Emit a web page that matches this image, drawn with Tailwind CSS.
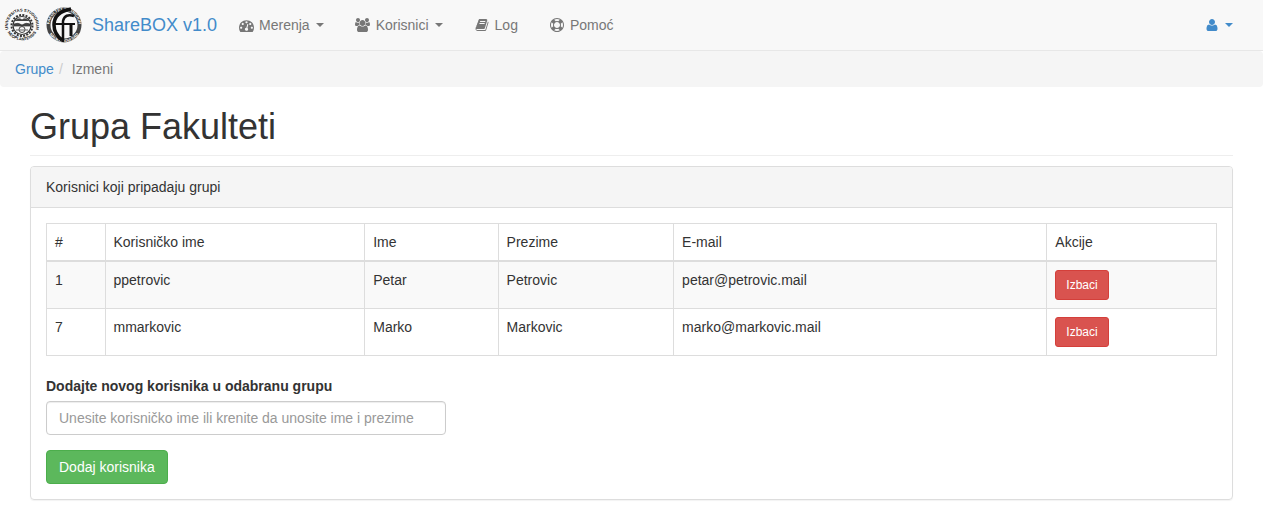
<!DOCTYPE html>
<html lang="sr-Latn">
<head>
    <meta charset="UTF-8">
    <meta name="viewport" content="width=device-width, initial-scale=1.0">
    <title>ShareBOX v1.0</title>
    <script src="https://cdn.jsdelivr.net/npm/@tailwindcss/browser@4"></script>
</head>
<body class="bg-white font-['Liberation_Sans',Arial,sans-serif] text-sm leading-5 text-[#333]">
    <nav class="flex items-center justify-between h-[51px] pr-[15px] border-b border-[#e7e7e7] bg-[#f8f8f8] text-[#777]">
        <div class="flex items-center">
            <a href="#" class="flex items-center gap-1 pl-1 text-lg leading-5 text-[#428bca]">
                <!-- university seal -->
                <svg class="w-9 h-10" viewBox="0 0 36 40" aria-hidden="true">
                    <defs>
                        <path id="sealTop" d="M6.2 28.5A14.2 14.2 0 1 1 29.8 28.5"/>
                        <path id="sealBottom" d="M1.8 23.5A17 17 0 0 0 34.2 23.5"/>
                    </defs>
                    <g fill="#111" font-family="Liberation Sans" font-weight="700" font-size="4">
                        <text><textPath href="#sealTop" startOffset="50%" text-anchor="middle">UNIVERSITAS STUDIORUM</textPath></text>
                        <text><textPath href="#sealBottom" startOffset="50%" text-anchor="middle">NEOPLANTENSIS</textPath></text>
                    </g>
                    <circle cx="18" cy="20.5" r="10.5" fill="none" stroke="#333" stroke-width="2" stroke-dasharray="2 1.3"/>
                    <circle cx="18" cy="20.5" r="9" fill="none" stroke="#333" stroke-width="1.2"/>
                    <path d="M11 16q4-4 7-1 3-3 7 1M10 19q4-2 8 1 4-3 8-1v2H10z" fill="#444" stroke="#333" stroke-width=".7"/>
                    <circle cx="18" cy="24.5" r="3" fill="none" stroke="#444"/>
                    <path d="M12 25h12" stroke="#666"/>
                </svg>
                <!-- faculty seal -->
                <svg class="w-10 h-10" viewBox="0 0 40 40" aria-hidden="true">
                    <defs>
                        <path id="ringTop" d="M5.5 20A14.5 14.5 0 0 1 34.5 20"/>
                        <path id="ringBottom" d="M2.7 20A17.3 17.3 0 0 0 37.3 20"/>
                    </defs>
                    <circle cx="20" cy="20" r="15.5" fill="#f8f8f8" stroke="#444" stroke-width="4"/>
                    <g fill="#fff" font-family="Liberation Sans" font-weight="700" font-size="4">
                        <text><textPath href="#ringTop" startOffset="50%" text-anchor="middle">FAKULTET TEHNIČKIH</textPath></text>
                        <text><textPath href="#ringBottom" startOffset="50%" text-anchor="middle">NAUKA NOVI SAD</textPath></text>
                    </g>
                    <path d="M27 4Q10 7 10 20q0 9 8 15" fill="none" stroke="#111" stroke-width="3.5"/>
                    <path d="M30 11q-9-3-11 5v21" fill="none" stroke="#111" stroke-width="2.5"/>
                    <path d="M10 19h21" stroke="#111" stroke-width="2"/>
                    <path d="M27 19v12" stroke="#111" stroke-width="3"/>
                </svg>
                <span class="pl-1">ShareBOX v1.0</span>
            </a>
            <ul class="flex items-center pl-5">
                <li>
                    <a href="#" class="flex items-center pr-[15px]">
                        <span class="flex justify-center w-[18px] mr-1"><svg class="w-[15px] h-[15px]" viewBox="0 0 1792 1792" fill="currentColor" aria-hidden="true"><path d="M384 1152q0-53-37.5-90.5t-90.5-37.5-90.5 37.5-37.5 90.5 37.5 90.5 90.5 37.5 90.5-37.5 37.5-90.5zm192-448q0-53-37.5-90.5t-90.5-37.5-90.5 37.5-37.5 90.5 37.5 90.5 90.5 37.5 90.5-37.5 37.5-90.5zm428 481l101-382q6-26-7.5-48.5t-38.5-29.5-48 6.5-30 39.5l-101 382q-60 5-107 43.5t-63 98.5q-20 77 20 146t117 89 146-20 89-117q16-60-6-117t-72-91zm660-33q0-53-37.5-90.5t-90.5-37.5-90.5 37.5-37.5 90.5 37.5 90.5 90.5 37.5 90.5-37.5 37.5-90.5zm-640-640q0-53-37.5-90.5t-90.5-37.5-90.5 37.5-37.5 90.5 37.5 90.5 90.5 37.5 90.5-37.5 37.5-90.5zm448 192q0-53-37.5-90.5t-90.5-37.5-90.5 37.5-37.5 90.5 37.5 90.5 90.5 37.5 90.5-37.5 37.5-90.5zm320 448q0 261-141 483-19 29-54 29h-1402q-35 0-54-29-141-221-141-483 0-182 71-348t191-286 286-191 348-71 348 71 286 191 191 286 71 348z"/></svg></span>
                        Merenja
                        <span class="ml-1.5 border-x-4 border-t-4 border-x-transparent border-t-current"></span>
                    </a>
                </li>
                <li>
                    <a href="#" class="flex items-center px-[15px]">
                        <span class="flex justify-center w-[18px] mr-1"><svg class="w-[15px] h-3.5" viewBox="0 0 1920 1792" fill="currentColor" aria-hidden="true"><path d="M593 896q-162 5-265 128h-134q-82 0-138-40.5t-56-118.5q0-353 124-353 6 0 43.5 21t97.5 42.5 119 21.5q67 0 133-23-5 37-5 66 0 139 81 256zm1071 637q0 120-73 189.5t-194 69.5h-874q-121 0-194-69.5t-73-189.5q0-53 3.5-103.5t14-109 26.5-108.5 43-97.5 62-81 85.5-53.5 111.5-20q10 0 43 21.5t73 48 107 48 135 21.5 135-21.5 107-48 73-48 43-21.5q61 0 111.5 20t85.5 53.5 62 81 43 97.5 26.5 108.5 14 109 3.5 103.5zm-1024-1277q0 106-75 181t-181 75-181-75-75-181 75-181 181-75 181 75 75 181zm704 384q0 159-112.5 271.5t-271.5 112.5-271.5-112.5-112.5-271.5 112.5-271.5 271.5-112.5 271.5 112.5 112.5 271.5zm576 225q0 78-56 118.5t-138 40.5h-134q-103-123-265-128 81-117 81-256 0-29-5-66 66 23 133 23 59 0 119-21.5t97.5-42.5 43.5-21q124 0 124 353zm-128-609q0 106-75 181t-181 75-181-75-75-181 75-181 181-75 181 75 75 181z"/></svg></span>
                        Korisnici
                        <span class="ml-1.5 border-x-4 border-t-4 border-x-transparent border-t-current"></span>
                    </a>
                </li>
                <li>
                    <a href="#" class="flex items-center px-[15px]">
                        <span class="flex justify-center w-[18px] mr-1"><svg class="w-3.5 h-3.5" viewBox="0 0 1792 1792" fill="currentColor" aria-hidden="true"><path d="M1703 478q40 57 18 129l-275 906q-19 64-76.5 107.5t-122.5 43.5h-923q-77 0-148.5-53.5t-99.5-131.5q-24-67-2-127 0-4 3-27t4-37q1-8-3-21.5t-3-19.5q2-11 8-21t16.5-23.5 16.5-23.5q23-38 45-91.5t30-91.5q3-10 .5-30t-.5-28q3-11 17-28t17-23q21-36 42-92t25-90q1-9-2.5-32t.5-28q4-13 22-30.5t22-22.5q19-26 42.5-84.5t27.5-96.5q1-8-3-25.5t-2-26.5q2-8 9-18t18-23 17-21q8-12 16.5-30.5t15-35 16-36 19.5-32 26.5-23.5 36-11.5 47.5 5.5l-1 3q38-9 51-9h761q74 0 114 56t18 130l-274 906q-36 119-71.5 153.5t-128.5 34.5h-869q-27 0-38 15-11 16-1 43 24 70 144 70h923q29 0 56-15.5t35-41.5l300-987q7-22 5-57 38 15 59 43zm-1064 2q-4 13 2 22.5t20 9.5h608q13 0 25.5-9.5t16.5-22.5l21-64q4-13-2-22.5t-20-9.5h-608q-13 0-25.5 9.5t-16.5 22.5zm-83 256q-4 13 2 22.5t20 9.5h608q13 0 25.5-9.5t16.5-22.5l21-64q4-13-2-22.5t-20-9.5h-608q-13 0-25.5 9.5t-16.5 22.5z"/></svg></span>
                        Log
                    </a>
                </li>
                <li>
                    <a href="#" class="flex items-center px-[15px]">
                        <span class="flex justify-center w-[18px] mr-1"><svg class="w-3.5 h-3.5" viewBox="0 0 1792 1792" fill="currentColor" aria-hidden="true"><path d="M896 0q182 0 348 71t286 191 191 286 71 348-71 348-191 286-286 191-348 71-348-71-286-191-191-286-71-348 71-348 191-286 286-191 348-71zm0 128q-190 0-361 90l194 194q82-28 167-28t167 28l194-194q-171-90-361-90zm-678 1129l194-194q-28-82-28-167t28-167l-194-194q-90 171-90 361t90 361zm678 407q190 0 361-90l-194-194q-82 28-167 28t-167-28l-194 194q171 90 361 90zm0-384q159 0 271.5-112.5t112.5-271.5-112.5-271.5-271.5-112.5-271.5 112.5-112.5 271.5 112.5 271.5 271.5 112.5zm484-217l194 194q90-171 90-361t-90-361l-194 194q28 82 28 167t-28 167z"/></svg></span>
                        Pomoć
                    </a>
                </li>
            </ul>
        </div>
        <a href="#" class="flex items-center px-[15px] text-[#428bca]" aria-label="Nalog">
            <span class="flex justify-center w-[18px] mr-1"><svg class="w-3.5 h-3.5" viewBox="0 0 1792 1792" fill="currentColor" aria-hidden="true"><path d="M1600 1405q0 120-73 189.5t-194 69.5h-874q-121 0-194-69.5t-73-189.5q0-53 3.5-103.5t14-109 26.5-108.5 43-97.5 62-81 85.5-53.5 111.5-20q9 0 42 21.5t74.5 48 108 48 133.5 21.5 133.5-21.5 108-48 74.5-48 42-21.5q61 0 111.5 20t85.5 53.5 62 81 43 97.5 26.5 108.5 14 109 3.5 103.5zm-320-893q0 159-112.5 271.5t-271.5 112.5-271.5-112.5-112.5-271.5 112.5-271.5 271.5-112.5 271.5 112.5 112.5 271.5z"/></svg></span>
            <span class="border-x-4 border-t-4 border-x-transparent border-t-current"></span>
        </a>
    </nav>

    <ol class="flex px-[15px] py-2 rounded bg-[#f5f5f5]">
        <li><a href="#" class="text-[#428bca]">Grupe</a></li>
        <li class="text-[#777]"><span class="px-[5px] mr-1 text-[#ccc]">/</span>Izmeni</li>
    </ol>

    <main class="px-[30px] pt-5 pb-[31px]">
        <h1 class="pb-2 mb-2.5 border-b border-[#eee] text-4xl leading-10">Grupa Fakulteti</h1>

        <section class="rounded border border-[#ddd] shadow-[0_1px_1px_rgba(0,0,0,0.05)]">
            <h2 class="px-[15px] py-2.5 rounded-t-[3px] border-b border-[#ddd] bg-[#f5f5f5]">Korisnici koji pripadaju grupi</h2>
            <div class="p-[15px]">
                <table class="w-full mb-5 table-fixed border-collapse text-left [&_td]:p-2 [&_td]:border [&_td]:border-[#ddd] [&_td]:align-top [&_th]:p-2 [&_th]:border [&_th]:border-b-2 [&_th]:border-[#ddd] [&_th]:font-normal">
                    <thead>
                        <tr>
                            <th class="w-[5%]">#</th>
                            <th class="w-[22.2%]">Korisničko ime</th>
                            <th class="w-[11.4%]">Ime</th>
                            <th class="w-[15%]">Prezime</th>
                            <th class="w-[31.9%]">E-mail</th>
                            <th>Akcije</th>
                        </tr>
                    </thead>
                    <tbody>
                        <tr class="bg-[#f9f9f9]">
                            <td>1</td>
                            <td>ppetrovic</td>
                            <td>Petar</td>
                            <td>Petrovic</td>
                            <td>petar@petrovic.mail</td>
                            <td><button type="button" class="block px-2.5 py-[5px] rounded-[3px] border border-[#d43f3a] bg-[#d9534f] text-xs leading-[18px] text-white">Izbaci</button></td>
                        </tr>
                        <tr>
                            <td>7</td>
                            <td>mmarkovic</td>
                            <td>Marko</td>
                            <td>Markovic</td>
                            <td>marko@markovic.mail</td>
                            <td><button type="button" class="block px-2.5 py-[5px] rounded-[3px] border border-[#d43f3a] bg-[#d9534f] text-xs leading-[18px] text-white">Izbaci</button></td>
                        </tr>
                    </tbody>
                </table>

                <form>
                    <label for="korisnik" class="block mb-[5px] font-bold">Dodajte novog korisnika u odabranu grupu</label>
                    <input type="text" id="korisnik" placeholder="Unesite korisničko ime ili krenite da unosite ime i prezime" class="block w-[400px] max-w-full h-[34px] mb-[15px] px-3 rounded border border-[#ccc] bg-white shadow-[inset_0_1px_1px_rgba(0,0,0,0.075)] placeholder:text-[#999]">
                    <button type="button" class="block px-3 py-1.5 rounded border border-[#4cae4c] bg-[#5cb85c] text-white">Dodaj korisnika</button>
                </form>
            </div>
        </section>
    </main>
</body>
</html>
